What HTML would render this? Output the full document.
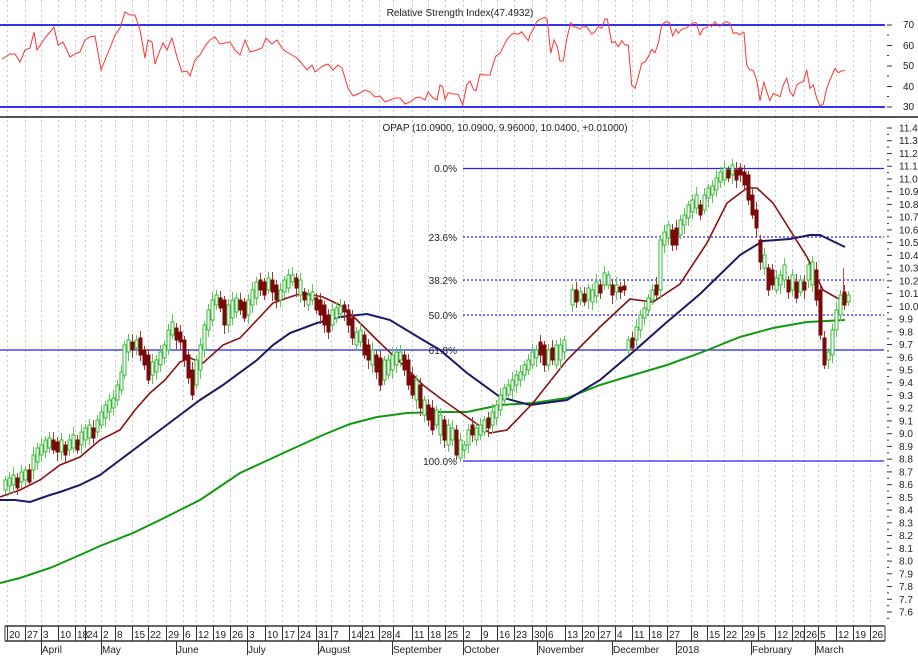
<!DOCTYPE html>
<html><head><meta charset="utf-8">
<style>
html,body{margin:0;padding:0;background:#fff;width:918px;height:657px;overflow:hidden}
svg{display:block}
text{font-family:"Liberation Sans",sans-serif;font-size:10px;fill:#222}
.ax{font-size:10px}
.fib{fill:#3333ee;font-size:10px}
</style></head>
<body>
<svg id="s" width="918" height="657" viewBox="0 0 918 657" xmlns="http://www.w3.org/2000/svg">
<g id="grid" stroke="#c8c8c8" stroke-width="1" stroke-dasharray="2,3"></g>
<!-- RSI panel -->
<line x1="0" y1="25" x2="885" y2="25" stroke="#3333ee" stroke-width="2"/>
<line x1="0" y1="107" x2="885" y2="107" stroke="#3333ee" stroke-width="2"/>
<text x="460" y="16" text-anchor="middle" transform="scale(1,1)">Relative Strength Index(47.4932)</text>
<polyline id="rsi" fill="none" stroke="#ff3333" stroke-width="1"/>
<line x1="0" y1="117" x2="918" y2="117" stroke="#555" stroke-width="2"/>
<g class="ax">
<text x="903" y="28">70</text><text x="903" y="49">60</text><text x="903" y="69">50</text><text x="903" y="90">40</text><text x="903" y="110">30</text>
</g>
<!-- main -->
<text x="505" y="131" text-anchor="middle">OPAP (10.0900, 10.0900, 9.96000, 10.0400, +0.01000)</text>
<g stroke="#2222ee" stroke-width="1.2">
<line x1="463" y1="168.5" x2="884" y2="168.5"/>
<line x1="463" y1="237" x2="884" y2="237" stroke-dasharray="2,2"/>
<line x1="463" y1="280" x2="884" y2="280" stroke-dasharray="2,2"/>
<line x1="463" y1="315" x2="884" y2="315" stroke-dasharray="2,2"/>
<line x1="0" y1="350" x2="884" y2="350"/>
<line x1="463" y1="461" x2="884" y2="461"/>
</g>
<g class="fib" text-anchor="end">
<text x="457" y="172">0.0%</text><text x="457" y="241">23.6%</text><text x="457" y="284">38.2%</text><text x="457" y="319">50.0%</text><text x="457" y="354">61.8%</text><text x="457" y="465">100.0%</text>
</g>
<polyline fill="none" stroke="#119911" stroke-width="2" points="0,583 20,578 50,568 80,555 100,546 133,533 160,520 200,500 240,473 290,450 323,435 350,424 377,417 407,413 440,412 467,412 500,405 533,403 567,398 600,385 633,375 667,365 700,353 740,337 773,328 807,322 845,320"/>
<polyline fill="none" stroke="#1a1a66" stroke-width="2" points="0,500 15,500 30,502 50,495 60,492 80,485 100,475 120,460 140,445 160,430 180,415 200,400 223,385 257,360 273,345 290,333 317,323 340,317 367,314 390,320 423,340 440,350 467,373 500,397 530,405 567,400 600,380 633,352 667,322 700,294 740,255 763,241 790,239 810,235 820,235 845,247"/>
<polyline fill="none" stroke="#881111" stroke-width="1.6" points="0,497 20,490 40,480 60,465 80,457 100,440 120,430 135,410 150,393 165,380 180,362 190,358 203,363 223,345 240,338 257,320 273,303 290,297 303,293 323,297 340,305 357,320 377,340 400,362 423,385 440,398 467,417 490,433 507,430 533,403 567,360 600,327 630,299 653,302 680,284 707,243 727,203 747,188 757,188 773,203 790,230 807,257 823,290 837,298 848,302"/>
<g id="candles"></g>
<g class="ax" id="pax"></g>
<!-- date axis -->
<line x1="5" y1="626" x2="885" y2="626" stroke="#333" stroke-width="1.5"/>
<line x1="5" y1="641" x2="885" y2="641" stroke="#333" stroke-width="1.5"/>
<g id="dax" stroke="#333" stroke-width="1"></g>
<g class="ax" id="dlab"></g>
<g class="ax">
<text x="42" y="653">April</text><text x="102" y="653">May</text><text x="177" y="653">June</text><text x="248" y="653">July</text><text x="319" y="653">August</text><text x="393" y="653">September</text><text x="464" y="653">October</text><text x="538" y="653">November</text><text x="613" y="653">December</text><text x="677" y="653">2018</text><text x="752" y="653">February</text><text x="816" y="653">March</text>
</g>
</svg>
<script>
var NS="http://www.w3.org/2000/svg";
function el(t,a,p){var e=document.createElementNS(NS,t);for(var k in a)e.setAttribute(k,a[k]);p.appendChild(e);return e;}
var dates=[[7,"20"],[25,"27"],[41,"3"],[58,"10"],[75,"18"],[85,"24"],[101,"2"],[115,"8"],[132,"15"],[148,"22"],[166,"29"],[183,"6"],[196,"12"],[213,"19"],[230,"26"],[247,"3"],[265,"10"],[282,"17"],[298,"24"],[316,"31"],[331,"7"],[349,"14"],[362,"21"],[379,"28"],[393,"4"],[412,"11"],[428,"18"],[445,"25"],[463,"2"],[481,"9"],[497,"16"],[514,"23"],[532,"30"],[546,"6"],[565,"13"],[582,"20"],[598,"27"],[615,"4"],[632,"11"],[649,"18"],[667,"27"],[691,"8"],[707,"15"],[724,"22"],[742,"29"],[758,"5"],[775,"12"],[792,"20"],[804,"26"],[818,"5"],[836,"12"],[853,"19"],[870,"26"]];
var months=[41,101,176,247,318,392,463,537,612,676,751,815];
var g=document.getElementById("grid"),dx=document.getElementById("dax"),dl=document.getElementById("dlab");
el("line",{x1:5,y1:626,x2:5,y2:641},dx);el("line",{x1:885,y1:626,x2:885,y2:641},dx);
dates.forEach(function(d){var x=d[0]+0.5;
 el("line",{x1:x,y1:0,x2:x,y2:626},g);
 el("line",{x1:x,y1:626,x2:x,y2:641},dx);
 var t=el("text",{x:d[0]+2,y:638},dl);t.textContent=d[1];});
months.forEach(function(m){el("line",{x1:m+0.5,y1:641,x2:m+0.5,y2:655},dx);});
// price axis
var pa=document.getElementById("pax");
for(var i=0;i<=38;i++){var v=11.4-i*0.1;var y=128+i*(484/38);
 var t=el("text",{x:899,y:y+3.5},pa);t.textContent=v.toFixed(1);
 el("line",{x1:887,y1:y,x2:892,y2:y,stroke:"#333"},pa);
 el("line",{x1:887,y1:y+6.4,x2:889,y2:y+6.4,stroke:"#333"},pa);}
for(var i=0;i<5;i++){var y=25+i*20.5;el("line",{x1:887,y1:y,x2:892,y2:y,stroke:"#333"},pa);el("line",{x1:887,y1:y+10,x2:889,y2:y+10,stroke:"#333"},pa);}
// rsi
var r1=[[2,59],[10,54],[15,54],[20,62],[25,50],[30,48],[34,32],[37,50],[45,38],[50,32],[54,27],[58,45],[63,42],[70,57],[75,54],[80,52],[85,40],[90,37],[95,36],[101,70],[105,60],[110,48],[115,35],[120,28],[125,12],[130,15],[135,15],[140,30],[145,58],[148,40],[152,42],[155,64],[160,50],[163,43],[167,50],[172,38],[177,57],[182,72],[187,71],[190,76],[195,60],[200,55],[205,46],[210,40],[215,37],[220,44],[225,43],[230,42],[235,50],[240,55],[245,40],[250,52],[257,50],[262,48],[266,38],[272,44],[277,40],[282,48],[285,51],[292,55],[297,58],[303,65],[307,70],[312,65],[315,72],[320,68],[323,66],[328,64],[333,70],[338,65],[342,68],[348,88],[353,96],[360,93],[365,90],[370,92],[375,97],[380,96],[385,102],[390,100],[395,98],[400,98],[405,104],[410,102],[415,98],[420,97],[425,100],[428,92],[433,98],[437,100]];
var z=[[0,255],[8,260],[15,298],[25,278],[40,282],[55,283],[68,315],[80,255],[90,243],[100,268],[108,272],[120,222],[135,225],[150,225],[160,190],[168,168],[180,160],[190,140],[200,120],[210,108],[220,100],[235,103],[245,95],[255,110],[265,122],[270,105],[280,88],[290,65],[300,58],[315,52],[322,60],[332,160],[342,120],[352,140],[360,183],[370,183],[380,118],[392,68],[400,80],[410,82],[420,88],[430,78],[440,80],[455,102],[465,95],[475,80],[485,85],[495,57],[502,57],[515,128],[525,125],[535,140],[545,122],[555,135],[565,135],[575,255],[585,265],[595,230],[605,190],[615,185],[625,170],[635,148],[645,158],[655,130],[665,75],[678,65],[688,68],[698,108],[708,88],[715,100],[725,88],[740,83],[750,75],[760,68],[768,68],[780,105],[790,85],[800,83],[808,73],[815,80],[825,65],[835,78],[842,78],[850,70],[860,65],[870,70],[880,100],[890,98],[898,105],[905,100],[912,97],[920,195],[928,208],[940,212],[950,240],[960,302],[972,245],[980,275],[990,302],[1000,280],[1010,285],[1020,290],[1030,255],[1040,235],[1050,275],[1060,288],[1070,255],[1080,248],[1090,245],[1100,210],[1110,265],[1120,255],[1130,295],[1140,318],[1150,312],[1160,265],[1170,240],[1185,205],[1195,218],[1205,212],[1215,212]];
var pts=r1.map(function(p){return p.join(",")});
z.forEach(function(p){pts.push((440+p[0]/3).toFixed(1)+","+(p[1]/3).toFixed(1));});
document.getElementById("rsi").setAttribute("points",pts.join(" "));
// candles
var c=[[5,480,490,1],[9,478,486,1],[13,475,485,1],[17,478,488,0],[21,472,482,1],[25,470,480,1],[29,470,482,0],[33,455,470,1],[37,448,462,1],[41,445,455,1],[45,440,452,1],[49,438,448,1],[53,440,450,0],[57,442,452,0],[61,440,452,1],[65,445,455,0],[69,440,450,1],[73,435,448,1],[77,440,450,0],[81,432,445,1],[85,428,440,1],[89,425,438,1],[93,428,438,0],[97,420,432,1],[101,412,425,1],[105,405,418,1],[109,400,412,1],[113,398,408,1],[117,385,400,1],[121,372,390,1],[124,345,375,1],[128,340,352,1],[132,342,350,0],[136,340,348,1],[140,338,355,0],[144,350,365,0],[148,355,380,0],[152,362,375,1],[156,360,372,1],[160,352,365,1],[164,345,358,1],[168,330,350,1],[172,322,335,1],[176,328,340,0],[180,332,342,0],[184,340,360,0],[188,355,378,0],[192,370,395,0],[196,360,385,1],[200,345,370,1],[204,325,350,1],[208,310,330,1],[212,300,320,1],[216,295,305,1],[220,298,308,0],[224,300,325,0],[228,305,325,1],[232,300,318,1],[236,298,312,1],[240,300,310,0],[244,302,318,0],[248,300,315,1],[252,290,305,1],[256,282,298,1],[260,280,290,0],[264,282,295,0],[268,278,290,1],[272,280,292,0],[276,285,300,0],[280,290,300,1],[284,280,292,1],[288,275,288,1],[292,275,282,1],[296,278,288,0],[300,280,295,1],[304,292,300,0],[308,295,305,1],[312,292,300,1],[316,298,310,0],[320,300,315,0],[324,305,325,0],[328,315,332,0],[332,310,325,1],[336,308,318,1],[340,306,314,1],[344,305,312,0],[348,310,325,0],[352,318,338,0],[356,332,345,1],[360,330,342,1],[364,335,355,0],[368,345,360,0],[372,350,365,1],[376,355,372,0],[380,358,385,0],[384,360,380,1],[388,360,375,1],[392,355,370,1],[396,352,365,1],[400,352,360,1],[404,355,370,0],[408,360,385,0],[412,375,395,0],[416,380,400,1],[420,385,408,0],[424,400,415,1],[428,405,420,0],[432,408,430,0],[436,410,425,1],[440,415,435,1],[444,420,440,0],[448,425,445,1],[452,428,440,1],[456,430,455,0],[460,440,458,1],[464,445,450,1],[468,430,445,1],[472,425,435,0],[476,428,440,1],[480,425,435,1],[484,420,432,1],[488,418,428,0],[492,412,425,1],[496,405,418,1],[500,395,410,1],[504,388,400,1],[508,385,395,1],[512,380,390,1],[516,375,385,1],[520,372,380,1],[524,365,375,1],[528,360,370,1],[532,352,365,1],[536,350,358,1],[540,342,355,0],[544,345,365,0],[548,350,365,1],[552,348,360,0],[556,345,365,1],[560,345,360,1],[564,340,352,1],[572,290,305,1],[576,290,302,0],[580,292,300,1],[584,294,302,0],[588,288,300,1],[592,290,302,1],[596,282,296,1],[600,285,293,0],[604,273,285,1],[608,275,285,1],[612,285,295,0],[616,285,292,1],[620,287,292,0],[624,286,290,0],[628,340,350,1],[632,338,348,0],[636,327,340,1],[640,315,330,1],[644,308,318,1],[648,298,310,1],[652,290,300,1],[656,285,295,0],[660,240,290,1],[664,232,245,1],[668,225,238,1],[672,230,245,0],[676,228,245,0],[680,220,235,1],[684,215,225,1],[688,205,218,1],[692,200,212,1],[696,195,208,1],[700,205,215,0],[704,195,210,1],[708,188,198,1],[712,186,195,1],[716,178,190,1],[720,172,182,1],[724,168,180,1],[728,170,178,0],[732,165,175,1],[736,170,180,0],[740,168,175,0],[744,172,185,0],[748,175,200,0],[752,195,215,0],[756,210,228,0],[760,240,262,0],[764,255,268,1],[768,268,290,0],[772,270,285,0],[776,278,290,1],[780,275,285,1],[784,265,280,1],[788,280,292,0],[792,275,290,1],[796,282,298,0],[800,280,292,1],[804,282,290,0],[808,265,280,1],[812,262,285,1],[816,270,300,0],[820,290,335,0],[824,338,365,0],[828,352,360,1],[832,330,355,1],[836,310,330,1],[840,295,315,1],[844,292,305,0],[848,295,302,1]];
var cg=document.getElementById("candles");
c.forEach(function(k,i){var up=k[3],col=up?"#33bb33":"#7a0a0a";var x=k[0]+0.5;
 var h=4+(i*7%5),l=4+(i*11%6);
 el("line",{x1:x,y1:k[1]-h,x2:x,y2:k[2]+l,stroke:up?"#55cc55":"#aa3333","stroke-width":1},cg);
 el("rect",{x:k[0]-1,y:k[1],width:3,height:Math.max(1,k[2]-k[1]),fill:up?"#fff":col,stroke:col,"stroke-width":1},cg);});
el("line",{x1:843.5,y1:268,x2:843.5,y2:292,stroke:"#cc4444"},cg);
</script>
</body></html>
